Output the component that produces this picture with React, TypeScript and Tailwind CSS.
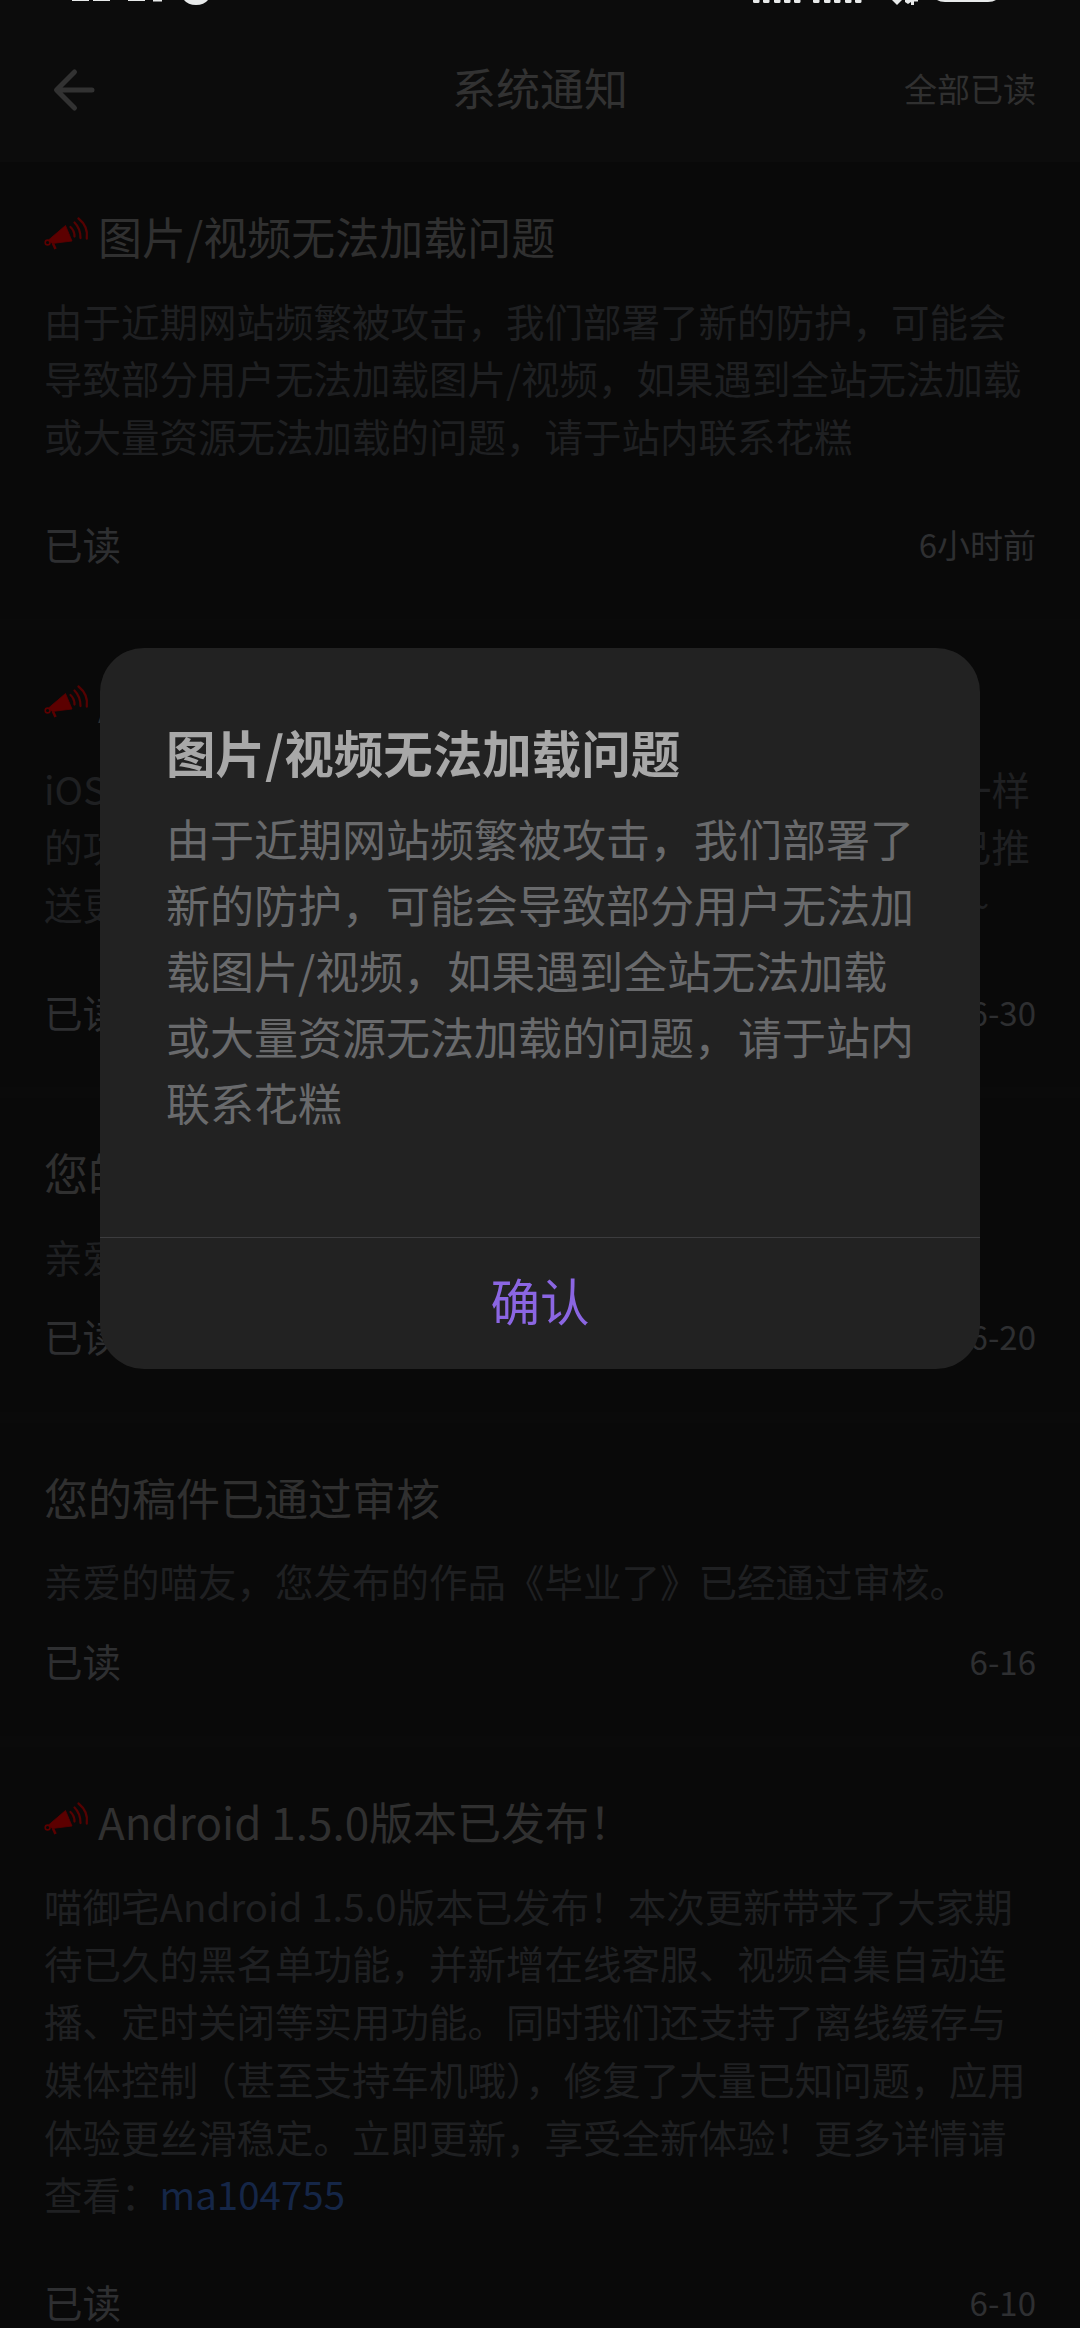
import type { ReactNode } from 'react';

interface Notice {
  id: number;
  title: string;
  body: ReactNode;
  time: string;
  announcement?: boolean;
}

const MODAL_BODY =
  '由于近期网站频繁被攻击，我们部署了新的防护，可能会导致部分用户无法加载图片/视频，如果遇到全站无法加载或大量资源无法加载的问题，请于站内联系花糕';

const NOTICES: Notice[] = [
  {
    id: 1,
    title: '图片/视频无法加载问题',
    body: MODAL_BODY,
    time: '6小时前',
    announcement: true,
  },
  {
    id: 2,
    title: 'App版本更新',
    body: (
      <>
        iOS版本现已更新，本次更新带来了与安卓版本完全的一样
        <br />
        的功能，欢迎大家更新体验，新版本的iOS应用目前现已推
        <br />
        送更新，感谢大家一直以来对我们的支持和陪伴与鼓励~
      </>
    ),
    time: '6-30',
    announcement: true,
  },
  {
    id: 3,
    title: '您的稿件已通过审核',
    body: '亲爱的喵友，您发布的作品已经通过审核。',
    time: '6-20',
  },
  {
    id: 4,
    title: '您的稿件已通过审核',
    body: '亲爱的喵友，您发布的作品《毕业了》已经通过审核。',
    time: '6-16',
  },
  {
    id: 5,
    title: 'Android 1.5.0版本已发布！',
    body: (
      <>
        喵御宅Android 1.5.0版本已发布！本次更新带来了大家期
        <br />
        待已久的黑名单功能，并新增在线客服、视频合集自动连
        <br />
        播、定时关闭等实用功能。同时我们还支持了离线缓存与
        <br />
        媒体控制（甚至支持车机哦），修复了大量已知问题，应用
        <br />
        体验更丝滑稳定。立即更新，享受全新体验！更多详情请
        <br />
        查看：<span className="text-[#152647]">ma104755</span>
      </>
    ),
    time: '6-10',
    announcement: true,
  },
];

function MegaphoneIcon() {
  return (
    <svg className="w-[46px] h-[36px] shrink-0" viewBox="0 0 46 36" fill="none">
      <path d="M21.500 9.500 L28 25 L8 27.500 L4.500 24 Z" fill="#5c0000" stroke="#5c0000" strokeWidth="0.8" strokeLinejoin="round" />
      <circle cx="3.6" cy="26.500" r="2.4" stroke="#5c0000" strokeWidth="1.6" />
      <path d="M9 27.500 L11.500 33" stroke="#5a0000" strokeWidth="2.6" />
      <g stroke="#540202" strokeWidth="2.3" strokeLinecap="round">
        <path d="M26.500 11 Q30.500 14.500 30.500 20.500" />
        <path d="M30.500 6.500 Q36.500 12.500 36.500 22" />
        <path d="M34.500 2.500 Q44.500 10.500 42.800 22.500" />
      </g>
    </svg>
  );
}

function StatusBar() {
  return (
    <svg className="block w-full h-[6px]" viewBox="0 0 1080 6" fill="#e8eaea">
      <rect x="72" y="0" width="17" height="1" />
      <rect x="93" y="0" width="17" height="1" />
      <rect x="128" y="0" width="17" height="1" />
      <rect x="153" y="0" width="9" height="1.5" />
      <path d="M184 0 H208 Q204 5 196 5 Q188 5 184 0Z" />
      {[753, 763, 774, 784, 794, 813, 824, 834, 845, 855].map((x) => (
        <rect key={x} x={x} y="-3" width="6.5" height="6" rx="1.5" />
      ))}
      <path d="M892 0 H902 L897 5Z" />
      <path d="M905 0 H918 V1.5 H914 V5 H911 V2 L908 4 L905 2Z" />
      <path d="M937 0 H996 Q993 2 988 2 H945 Q940 2 937 0Z" />
    </svg>
  );
}

function Header() {
  return (
    <header className="h-[162px] bg-[#0c0c0c]">
      <StatusBar />
      <div className="h-[162px] -mt-[6px] pt-[17px] px-[44px] grid grid-cols-3 items-center text-[#323232]">
        <svg className="w-[60px] h-[50px]" viewBox="0 0 60 50" fill="none" stroke="#323232" strokeWidth="5" strokeLinecap="round" strokeLinejoin="round">
          <path d="M48 25 H13 M30.500 7 L12.500 25 L30.500 43" />
        </svg>
        <h1 className="pb-[5px] text-[44px] leading-[66px] text-center">系统通知</h1>
        <span className="pb-[2px] text-[33px] text-right text-[#303030]">全部已读</span>
      </div>
    </header>
  );
}

function NoticeItem({ notice }: { notice: Notice }) {
  return (
    <article className="pt-[41px] px-[44px] pb-[46.5px] border-b-[11px] border-[#0a0a0a] bg-[#090909]">
      <div className="flex items-center">
        {notice.announcement && (
          <div className="w-[54px] pb-[5px]">
            <MegaphoneIcon />
          </div>
        )}
        <h2 className="text-[44px] leading-[66px] text-[#303030] whitespace-nowrap">{notice.title}</h2>
      </div>
      <div className={`mt-[22.5px] text-[38.5px] leading-[57.75px] text-[#1f2022] whitespace-pre-wrap ${notice.announcement ? 'mb-[50px]' : 'mb-[22px]'}`}>
        {notice.body}
      </div>
      <div className="h-[57.75px] flex items-center justify-between text-[#2e2f31]">
        <span className="text-[38.5px]">已读</span>
        <span className="pt-[2px] text-[33px]">{notice.time}</span>
      </div>
    </article>
  );
}

function NoticeModal() {
  return (
    <div className="absolute inset-0">
      <div
        role="dialog"
        className="mt-[648px] mx-auto w-[880px] h-[721px] rounded-[44px] bg-[#222222] overflow-hidden flex flex-col"
      >
        <div className="flex-1 pl-[66px] pr-[64px] pt-[67px]">
          <h3 className="text-[49.5px] leading-[74px] font-bold text-[#a8a8a8]">图片/视频无法加载问题</h3>
          <p className="mt-[16px] text-[44px] leading-[66px] text-[#696a6c]">{MODAL_BODY}</p>
        </div>
        <button className="h-[132px] pb-[6px] border-t border-[#3c3c3e] text-[49.5px] text-[#8b66e2]">确认</button>
      </div>
    </div>
  );
}

export default function App() {
  return (
    <div className="relative w-[1080px] h-[2328px] overflow-hidden bg-[#090909] font-['Noto_Sans_CJK_SC',sans-serif]" lang="zh-CN">
      <Header />
      <main>
        {NOTICES.map((notice) => (
          <NoticeItem key={notice.id} notice={notice} />
        ))}
      </main>
      <NoticeModal />
    </div>
  );
}
